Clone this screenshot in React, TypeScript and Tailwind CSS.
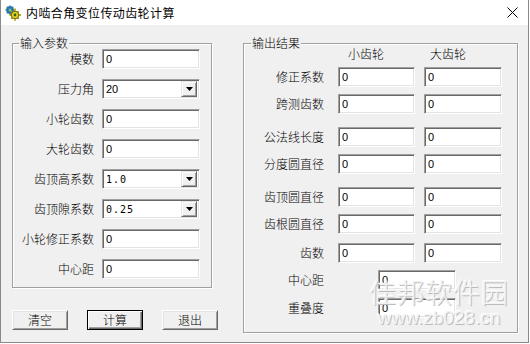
import React from 'react';

const sunken =
  'bg-white border border-t-[#a0a0a0] border-l-[#a0a0a0] border-r-white border-b-white shadow-[inset_1px_1px_0_#696969,inset_-1px_-1px_0_#e3e3e3]';

const Field = ({ value, w, cls = '' }: { value: string; w: string; cls?: string }) => (
  <div className={`${sunken} ${w} ${cls} h-[20px] pl-[3px] flex items-center text-[11px] font-['Liberation_Sans',sans-serif]`}>
    {value}
  </div>
);

const Combo = ({ value, mono }: { value: string; mono?: boolean }) => (
  <div className={`${sunken} w-[98px] h-[20px] flex items-center pl-[3px] pr-[2px]`}>
    <span
      className={
        mono
          ? "flex-1 text-[10px] font-['DejaVu_Sans_Mono',monospace] tracking-[1px]"
          : "flex-1 text-[11px] font-['Liberation_Sans',sans-serif]"
      }
    >
      {value}
    </span>
    <div className="w-[16px] h-[16px] bg-[#f0f0f0] border border-t-[#e3e3e3] border-l-[#e3e3e3] border-r-[#696969] border-b-[#696969] shadow-[inset_1px_1px_0_#fff,inset_-1px_-1px_0_#a0a0a0] flex items-center justify-center">
      <svg width="7" height="4" viewBox="0 0 7 4">
        <path d="M0 0h7L3.5 4z" fill="#000" />
      </svg>
    </div>
  </div>
);

const Btn = ({ label, isDefault }: { label: string; isDefault?: boolean }) => (
  <div
    className={
      isDefault
        ? 'w-[56px] h-[20px] bg-[#f0f0f0] border border-black shadow-[inset_1px_1px_0_#fff,inset_-1px_-1px_0_#696969,inset_-2px_-2px_0_#a0a0a0] flex items-center justify-center text-[12px] leading-[12px]'
        : 'w-[56px] h-[20px] bg-[#f0f0f0] border border-t-white border-l-white border-r-[#696969] border-b-[#696969] shadow-[inset_1px_1px_0_#e3e3e3,inset_-1px_-1px_0_#a0a0a0] flex items-center justify-center text-[12px] leading-[12px]'
    }
  >
    {label}
  </div>
);

const GearIcon = () => (
  <svg width="16" height="16" viewBox="0 0 16 16">
    <g fill="#2f7fb8" stroke="#1b3a5a" strokeWidth="0.8">
      <circle cx="5" cy="5" r="3.4" />
    </g>
    <g stroke="#2f7fb8" strokeWidth="1.6">
      <path d="M5 0.5v2M5 7.5v2M0.5 5h2M7.5 5h2M1.8 1.8l1.3 1.3M8.2 1.8l-1.3 1.3M1.8 8.2l1.3-1.3" />
    </g>
    <circle cx="5" cy="5" r="1.2" fill="#7fd06a" />
    <g stroke="#b8a400" strokeWidth="1.8">
      <path d="M10 3.5v2.2M10 14.3v1.5M4.5 10h1.8M14 10h1.8M6.2 6.2l1.4 1.4M13.8 6.2l-1.4 1.4M6.2 13.8l1.4-1.4M13.8 13.8l-1.4-1.4" />
    </g>
    <circle cx="10" cy="10" r="3.8" fill="#e2d21a" stroke="#4a4200" strokeWidth="0.8" />
    <circle cx="10" cy="10" r="1.4" fill="#2f5f2a" />
  </svg>
);

const leftRows: { label: string; mt: string; kind: 'field' | 'combo'; value: string; mono?: boolean }[] = [
  { label: '模数', mt: 'mt-[5px]', kind: 'field', value: '0' },
  { label: '压力角', mt: 'mt-[10px]', kind: 'combo', value: '20' },
  { label: '小轮齿数', mt: 'mt-[10px]', kind: 'field', value: '0' },
  { label: '大轮齿数', mt: 'mt-[10px]', kind: 'field', value: '0' },
  { label: '齿顶高系数', mt: 'mt-[10px]', kind: 'combo', value: '1.0', mono: true },
  { label: '齿顶隙系数', mt: 'mt-[10px]', kind: 'combo', value: '0.25', mono: true },
  { label: '小轮修正系数', mt: 'mt-[10px]', kind: 'field', value: '0' },
  { label: '中心距', mt: 'mt-[10px]', kind: 'field', value: '0' },
];

const pairRows: { label: string; mt: string }[] = [
  { label: '修正系数', mt: 'mt-[7px]' },
  { label: '跨测齿数', mt: 'mt-[7px]' },
  { label: '公法线长度', mt: 'mt-[13px]' },
  { label: '分度圆直径', mt: 'mt-[7px]' },
  { label: '齿顶圆直径', mt: 'mt-[13px]' },
  { label: '齿根圆直径', mt: 'mt-[7px]' },
  { label: '齿数', mt: 'mt-[9px]' },
];

const singleRows: { label: string; mt: string }[] = [
  { label: '中心距', mt: 'mt-[7px]' },
  { label: '重叠度', mt: 'mt-[8px]' },
];

export default function App() {
  return (
    <div className="w-[530px] h-[344px] bg-white font-['Noto_Sans_CJK_SC','Noto_Sans',sans-serif] font-light text-black text-[12px] overflow-hidden">
      <div className="relative w-[529px] h-[343px] bg-[#f0f0f0] border-x border-b border-[#8a8a8a] flex flex-col">
        {/* title bar */}
        <div className="h-[25px] bg-white flex items-center pl-[4px] pr-[10px] shrink-0">
          <GearIcon />
          <span className="ml-[5px] text-[12px] leading-[12px] tracking-[0.4px] font-normal">内啮合角变位传动齿轮计算</span>
          <div className="flex-1" />
          <svg width="11" height="11" viewBox="0 0 11 11">
            <path d="M0.5 0.5l10 10M10.5 0.5l-10 10" stroke="#000" strokeWidth="1" />
          </svg>
        </div>

        <div className="flex">
          {/* left column */}
          <div className="w-[242px] pl-[11px] pt-[18px] shrink-0">
            <div className="relative w-[200px] h-[245px] border border-[#a0a0a0] shadow-[inset_1px_1px_0_#fff,1px_1px_0_#fff]">
              <span className="absolute -top-[7px] left-[6px] px-[1px] bg-[#f0f0f0] leading-[12px]">输入参数</span>
              <div className="flex flex-col">
                {leftRows.map((r) => (
                  <div key={r.label} className={`${r.mt} flex items-center h-[20px]`}>
                    <span className="w-[81px] text-right leading-[12px]">{r.label}</span>
                    <div className="ml-[8px]">
                      {r.kind === 'field' ? <Field value={r.value} w="w-[98px]" /> : <Combo value={r.value} mono={r.mono} />}
                    </div>
                  </div>
                ))}
              </div>
            </div>
            <div className="mt-[22px] flex gap-[19px]">
              <Btn label="清空" />
              <Btn label="计算" isDefault />
              <Btn label="退出" />
            </div>
          </div>

          {/* right group */}
          <div className="pt-[18px]">
            <div className="relative w-[275px] h-[290px] border border-[#a0a0a0] shadow-[inset_1px_1px_0_#fff,1px_1px_0_#fff]">
              <span className="absolute -top-[7px] left-[7px] px-[1px] bg-[#f0f0f0] leading-[12px]">输出结果</span>
              <div className="mt-[4px] h-[12px] flex pl-[104px] leading-[12px]">
                <span className="w-[82px]">小齿轮</span>
                <span>大齿轮</span>
              </div>
              {pairRows.map((r) => (
                <div key={r.label} className={`${r.mt} flex items-center h-[20px]`}>
                  <span className="w-[80px] text-right leading-[12px]">{r.label}</span>
                  <Field value="0" w="w-[77px]" cls="ml-[14px]" />
                  <Field value="0" w="w-[78px]" cls="ml-[9px]" />
                </div>
              ))}
              {singleRows.map((r) => (
                <div key={r.label} className={`${r.mt} flex items-center h-[20px]`}>
                  <span className="w-[80px] text-right leading-[12px]">{r.label}</span>
                  <Field value="0" w="w-[78px]" cls="ml-[54px]" />
                </div>
              ))}
            </div>
          </div>
        </div>

        {/* site watermark over the output group */}
        <div className="absolute left-[368px] top-[276px] flex flex-col items-center pointer-events-none">
          <span className="text-[27px] leading-[32px] tracking-[1px] text-[#f2f2f2] font-light [text-shadow:1px_1px_0_#bdbdbd,-1px_-1px_0_#ffffff]">
            佳邦软件园
          </span>
          <span className="text-[19px] leading-[20px] text-[#f2f2f2] font-['Liberation_Sans',sans-serif] [text-shadow:1px_1px_0_#bdbdbd,-1px_-1px_0_#ffffff]">
            www.zb028.cn
          </span>
        </div>
      </div>
    </div>
  );
}
